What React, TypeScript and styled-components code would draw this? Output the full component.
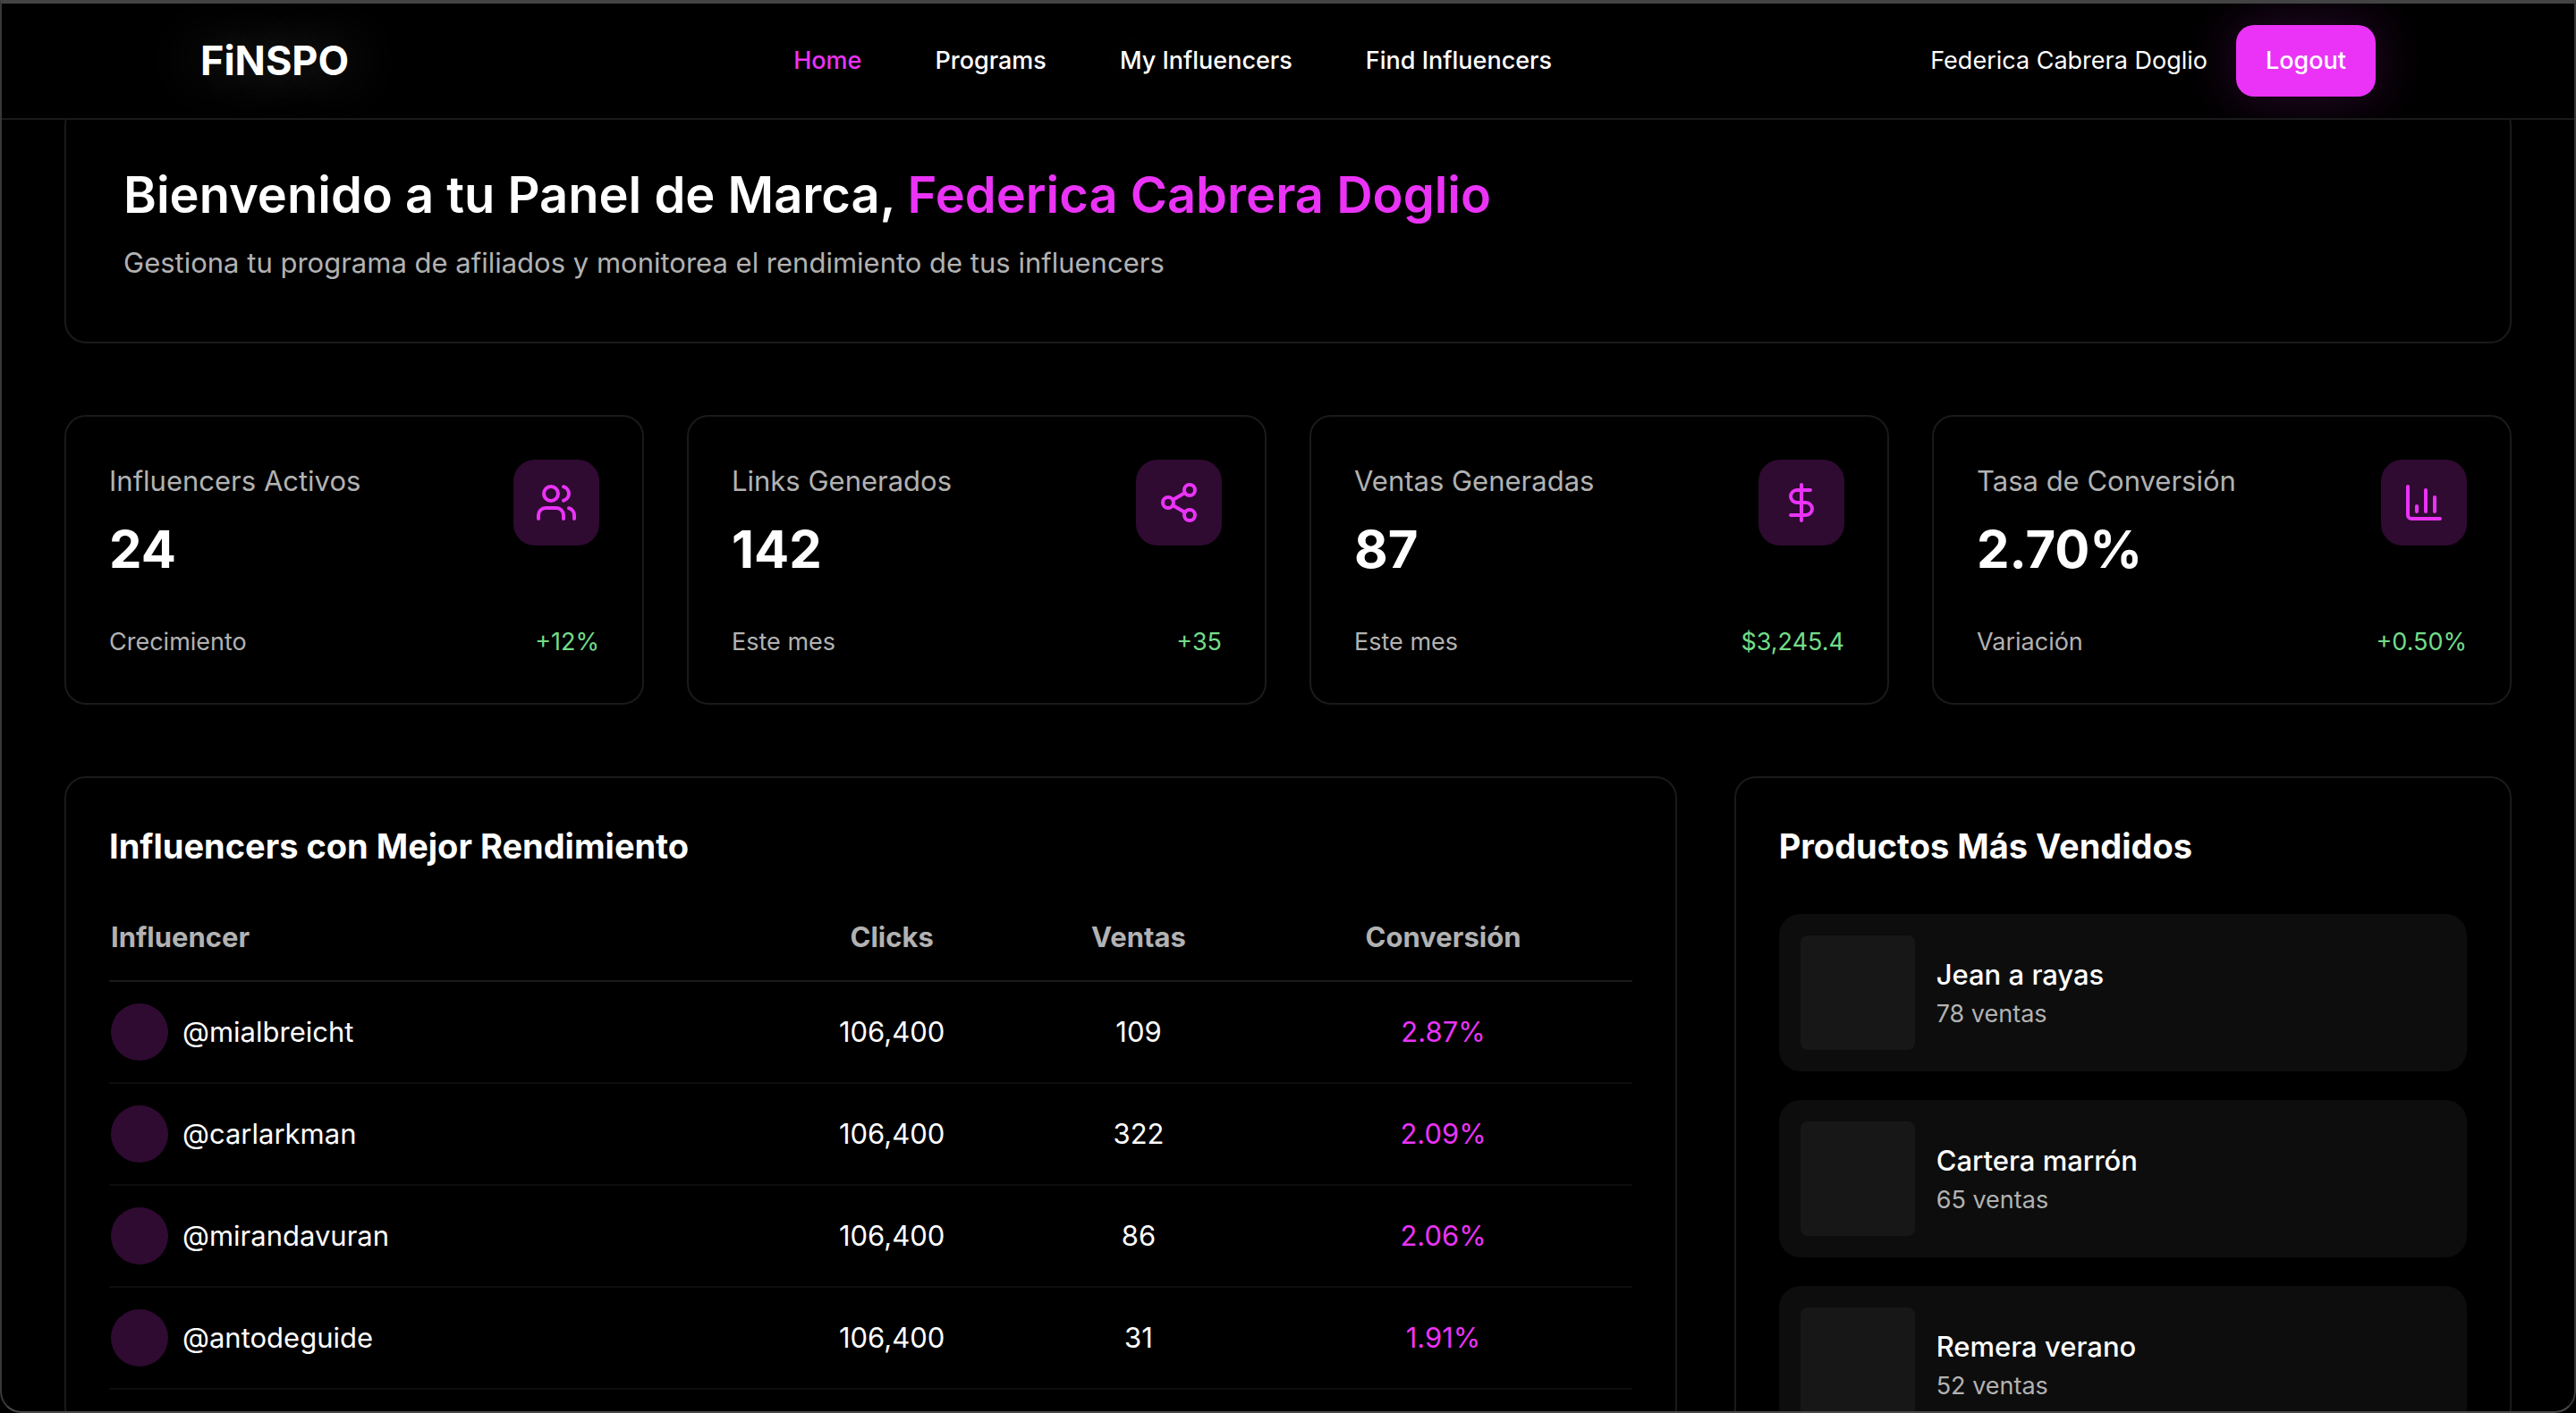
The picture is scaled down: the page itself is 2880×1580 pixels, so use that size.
import React from "react";
import styled, { createGlobalStyle } from "styled-components";
import { ChartColumn, DollarSign, Share2, Users, type LucideIcon } from "lucide-react";

const color = {
  accent: "#ea33f7",
  tint: "#2f0a31",
  line: "#1a1a1a",
  lineSoft: "#0d0d0d",
  muted: "#b2b2b2",
  positive: "#73dc88",
};

const GlobalStyle = createGlobalStyle`
  *, *::before, *::after { box-sizing: border-box; }
  html, body { margin: 0; background: #000; }
  body {
    color: #fff;
    font-family: Inter, "Liberation Sans", sans-serif;
    font-size: 31px;
    line-height: 48px;
    overflow: hidden;
  }
  h1, h2, p, ul { margin: 0; padding: 0; }
  ul { list-style: none; }
`;

const Window = styled.div`
  height: 100vh;
  overflow: hidden;
  padding-top: 4px;

  &::after {
    content: "";
    position: fixed;
    inset: 0;
    z-index: 20;
    border: 2px solid #383838;
    border-top: 4px solid #434343;
    border-bottom-color: #484848;
    border-radius: 0 0 24px 24px;
    pointer-events: none;
  }
`;

const Header = styled.header`
  position: fixed;
  top: 4px;
  left: 0;
  right: 0;
  z-index: 10;
  overflow: hidden;
  background: #000;
  border-bottom: 2px solid ${color.line};
`;

const HeaderInner = styled.div`
  display: flex;
  align-items: center;
  justify-content: space-between;
  max-width: 2432px;
  margin: 0 auto;
  padding: 24px 0;
  font-size: 27px;
  line-height: 40px;
`;

const Logo = styled.a`
  min-width: 240px;
  color: #fff;
  font-size: 45px;
  font-weight: 700;
  line-height: 64px;
  text-decoration: none;
  text-shadow: 0 0 60px rgba(255, 255, 255, 0.3);
`;

const Nav = styled.nav`
  display: flex;
  gap: 82px;
`;

const NavLink = styled.a<{ $active?: boolean }>`
  color: ${(p) => (p.$active ? color.accent : "#fff")};
  font-weight: 500;
  text-decoration: none;
  text-shadow: 0 0 60px ${(p) => (p.$active ? "rgba(234, 51, 247, 0.15)" : "rgba(255, 255, 255, 0.12)")};
`;

const Account = styled.div`
  display: flex;
  align-items: center;
  gap: 32px;
`;

const LogoutButton = styled.button`
  min-width: 156px;
  height: 80px;
  padding: 0 32px;
  border: 0;
  border-radius: 20px;
  background: ${color.accent};
  box-shadow: 0 0 60px rgba(234, 51, 247, 0.2);
  color: #fff;
  font: inherit;
  font-weight: 500;
  cursor: pointer;
`;

const Main = styled.main`
  display: flex;
  flex-direction: column;
  gap: 80px;
  padding: 112px 72px 80px;
`;

const Panel = styled.section`
  border: 2px solid ${color.line};
  border-radius: 24px;
  padding: 48px;
`;

const Banner = styled(Panel)`
  padding: 64px;
`;

const BannerTitle = styled.h1`
  margin-bottom: 16px;
  font-size: 56px;
  font-weight: 600;
  line-height: 72px;

  span {
    color: ${color.accent};
  }
`;

const Muted = styled.p`
  color: ${color.muted};
`;

const StatGrid = styled.div`
  display: grid;
  grid-template-columns: repeat(4, 1fr);
  gap: 48px;
`;

const StatTop = styled.div`
  display: flex;
  align-items: flex-start;
  justify-content: space-between;
  margin-bottom: 48px;
`;

const StatValue = styled.p`
  margin-top: 16px;
  font-size: 58px;
  font-weight: 700;
  line-height: 72px;
`;

const IconTile = styled.div`
  display: grid;
  place-items: center;
  width: 96px;
  height: 96px;
  border-radius: 24px;
  background: ${color.tint};
  color: ${color.accent};
`;

const StatFoot = styled.div`
  display: flex;
  justify-content: space-between;
  color: ${color.muted};
  font-size: 27px;
  line-height: 40px;
`;

const Positive = styled.span`
  color: ${color.positive};
`;

const Columns = styled.div`
  display: grid;
  grid-template-columns: repeat(3, 1fr);
  gap: 64px;
`;

const WidePanel = styled(Panel)`
  grid-column: span 2;
`;

const PanelTitle = styled.h2`
  margin-bottom: 48px;
  font-size: 38px;
  font-weight: 700;
  line-height: 56px;
`;

const Table = styled.table`
  width: 100%;
  table-layout: fixed;
  border-collapse: separate;
  border-spacing: 0;
`;

const HeadCell = styled.th<{ $width: string; $left?: boolean }>`
  width: ${(p) => p.$width};
  padding: 2px 2px 24px;
  border-bottom: 2px solid ${color.line};
  color: ${color.muted};
  font-weight: 700;
  text-align: ${(p) => (p.$left ? "left" : "center")};
`;

const Cell = styled.td<{ $accent?: boolean }>`
  padding: 24px 2px;
  border-bottom: 2px solid ${color.lineSoft};
  color: ${(p) => (p.$accent ? color.accent : "#fff")};
  text-align: center;
`;

const Person = styled.div`
  display: flex;
  align-items: center;
  gap: 16px;
`;

const Avatar = styled.span`
  width: 64px;
  height: 64px;
  border-radius: 50%;
  background: ${color.tint};
`;

const ProductList = styled.ul`
  display: flex;
  flex-direction: column;
  gap: 32px;
`;

const Product = styled.li`
  display: flex;
  align-items: center;
  gap: 24px;
  padding: 24px;
  border-radius: 24px;
  background: #0d0d0d;
`;

const Thumb = styled.div`
  width: 128px;
  height: 128px;
  border-radius: 8px;
  background: #171717;
`;

const ProductName = styled.p`
  font-weight: 500;
`;

const ProductSales = styled.p`
  color: ${color.muted};
  font-size: 27px;
  line-height: 40px;
`;

const brand = "Federica Cabrera Doglio";

const links = ["Home", "Programs", "My Influencers", "Find Influencers"];

const stats: { label: string; value: string; note: string; delta: string; Icon: LucideIcon }[] = [
  { label: "Influencers Activos", value: "24", note: "Crecimiento", delta: "+12%", Icon: Users },
  { label: "Links Generados", value: "142", note: "Este mes", delta: "+35", Icon: Share2 },
  { label: "Ventas Generadas", value: "87", note: "Este mes", delta: "$3,245.4", Icon: DollarSign },
  { label: "Tasa de Conversión", value: "2.70%", note: "Variación", delta: "+0.50%", Icon: ChartColumn },
];

const influencers = [
  { handle: "@mialbreicht", clicks: "106,400", sales: "109", rate: "2.87%" },
  { handle: "@carlarkman", clicks: "106,400", sales: "322", rate: "2.09%" },
  { handle: "@mirandavuran", clicks: "106,400", sales: "86", rate: "2.06%" },
  { handle: "@antodeguide", clicks: "106,400", sales: "31", rate: "1.91%" },
];

const products = [
  { name: "Jean a rayas", sales: 78 },
  { name: "Cartera marrón", sales: 65 },
  { name: "Remera verano", sales: 52 },
];

export default function App() {
  return (
    <Window>
      <GlobalStyle />
      <Header>
        <HeaderInner>
          <Logo href="#">FiNSPO</Logo>
          <Nav>
            {links.map((link, i) => (
              <NavLink key={link} href="#" $active={i === 0}>
                {link}
              </NavLink>
            ))}
          </Nav>
          <Account>
            <span>{brand}</span>
            <LogoutButton type="button">Logout</LogoutButton>
          </Account>
        </HeaderInner>
      </Header>

      <Main>
        <Banner>
          <BannerTitle>
            Bienvenido a tu Panel de Marca, <span>{brand}</span>
          </BannerTitle>
          <Muted>Gestiona tu programa de afiliados y monitorea el rendimiento de tus influencers</Muted>
        </Banner>

        <StatGrid>
          {stats.map(({ label, value, note, delta, Icon }) => (
            <Panel key={label}>
              <StatTop>
                <div>
                  <Muted>{label}</Muted>
                  <StatValue>{value}</StatValue>
                </div>
                <IconTile>
                  <Icon size={48} aria-hidden />
                </IconTile>
              </StatTop>
              <StatFoot>
                <span>{note}</span>
                <Positive>{delta}</Positive>
              </StatFoot>
            </Panel>
          ))}
        </StatGrid>

        <Columns>
          <WidePanel>
            <PanelTitle>Influencers con Mejor Rendimiento</PanelTitle>
            <Table>
              <thead>
                <tr>
                  <HeadCell $width="42.8%" $left>Influencer</HeadCell>
                  <HeadCell $width="17.2%">Clicks</HeadCell>
                  <HeadCell $width="15.2%">Ventas</HeadCell>
                  <HeadCell $width="24.8%">Conversión</HeadCell>
                </tr>
              </thead>
              <tbody>
                {influencers.map((row) => (
                  <tr key={row.handle}>
                    <Cell>
                      <Person>
                        <Avatar />
                        {row.handle}
                      </Person>
                    </Cell>
                    <Cell>{row.clicks}</Cell>
                    <Cell>{row.sales}</Cell>
                    <Cell $accent>{row.rate}</Cell>
                  </tr>
                ))}
              </tbody>
            </Table>
          </WidePanel>

          <Panel>
            <PanelTitle>Productos Más Vendidos</PanelTitle>
            <ProductList>
              {products.map((product) => (
                <Product key={product.name}>
                  <Thumb />
                  <div>
                    <ProductName>{product.name}</ProductName>
                    <ProductSales>{product.sales} ventas</ProductSales>
                  </div>
                </Product>
              ))}
            </ProductList>
          </Panel>
        </Columns>
      </Main>
    </Window>
  );
}
